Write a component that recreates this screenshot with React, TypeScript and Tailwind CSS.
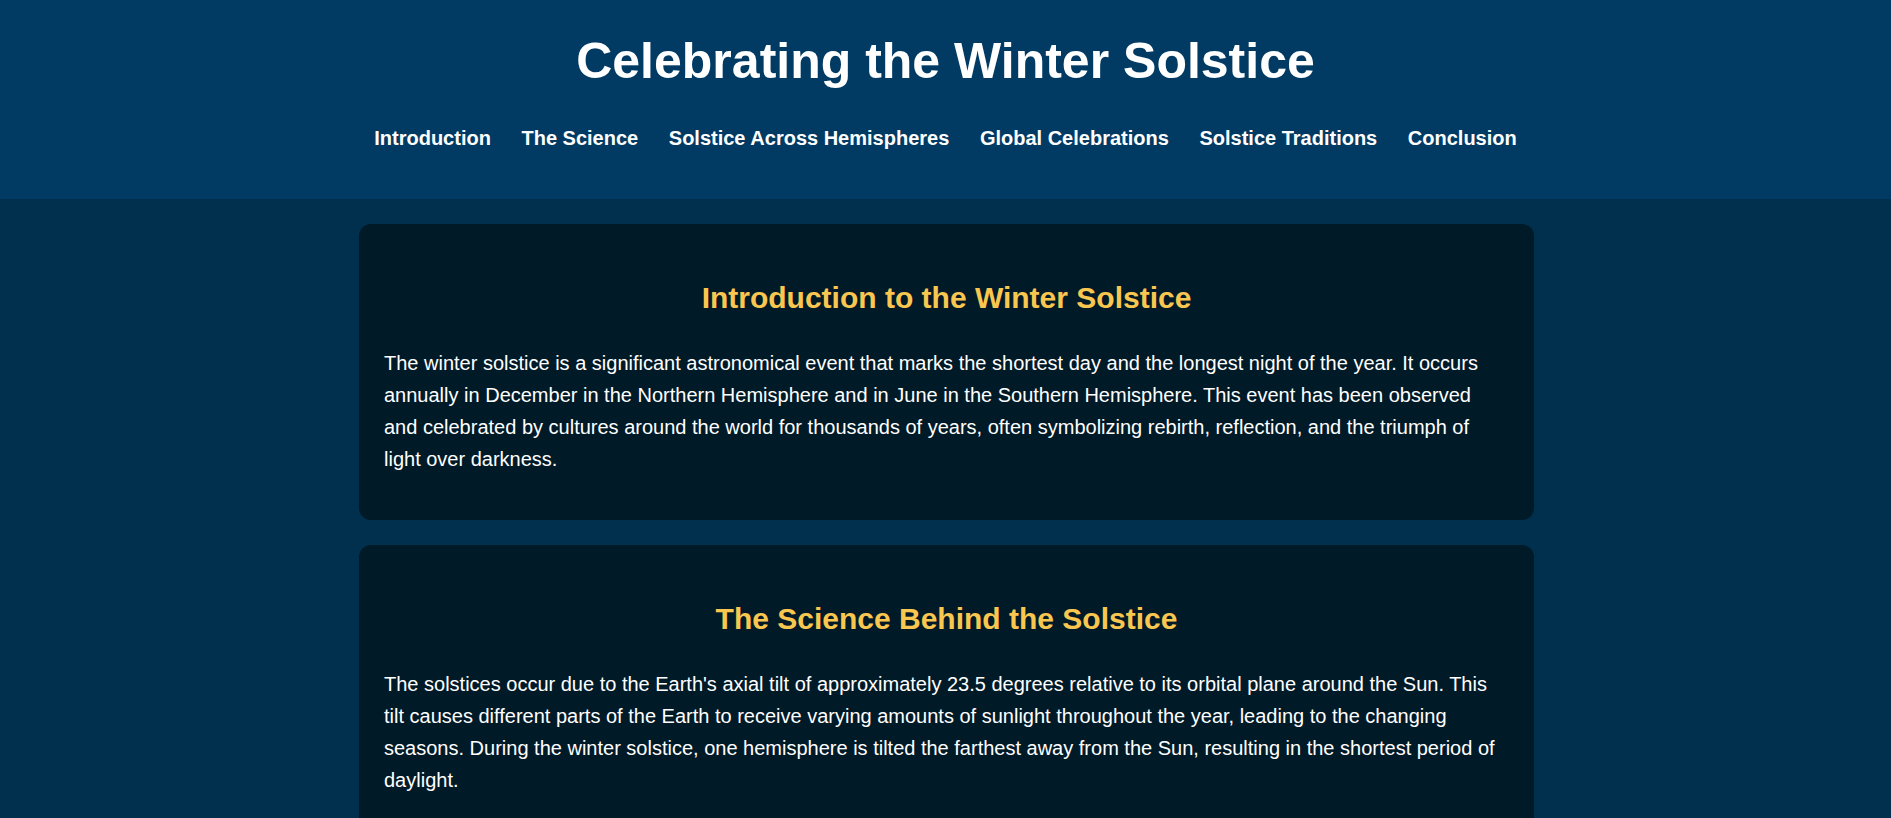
import React from "react";

const navItems = [
  "Introduction",
  "The Science",
  "Solstice Across Hemispheres",
  "Global Celebrations",
  "Solstice Traditions",
  "Conclusion",
];

const sections = [
  {
    title: "Introduction to the Winter Solstice",
    text: "The winter solstice is a significant astronomical event that marks the shortest day and the longest night of the year. It occurs annually in December in the Northern Hemisphere and in June in the Southern Hemisphere. This event has been observed and celebrated by cultures around the world for thousands of years, often symbolizing rebirth, reflection, and the triumph of light over darkness.",
  },
  {
    title: "The Science Behind the Solstice",
    text: "The solstices occur due to the Earth's axial tilt of approximately 23.5 degrees relative to its orbital plane around the Sun. This tilt causes different parts of the Earth to receive varying amounts of sunlight throughout the year, leading to the changing seasons. During the winter solstice, one hemisphere is tilted the farthest away from the Sun, resulting in the shortest period of daylight.",
  },
  {
    title: "Solstice Across Hemispheres",
    text: "While the Northern Hemisphere experiences its winter solstice around December 21st or 22nd, the Southern Hemisphere celebrates its summer solstice at the same time. Conversely, in June, the Southern Hemisphere marks its winter solstice while the north enjoys the longest day of the year.",
  },
  {
    title: "Global Celebrations",
    text: "From Yule in Scandinavia to Dongzhi in China and Inti Raymi in Peru, cultures across the globe have developed unique festivals to honor the return of the Sun and the gradual lengthening of days.",
  },
];

export default function App() {
  return (
    <div
      className="min-h-screen bg-[#01304f] text-white leading-[1.6]"
      style={{ fontFamily: '"Liberation Sans", Arial, sans-serif' }}
    >
      <header className="bg-[#013a63] pt-[33px] pb-[45px] text-center">
        <h1 className="text-[50px] font-bold leading-[56px]">Celebrating the Winter Solstice</h1>
        <nav className="mt-[33px] flex justify-center">
          {navItems.map((n) => (
            <a key={n} href="#" className="mx-[15.3px] text-[20px] font-bold leading-[32px] text-white">
              {n}
            </a>
          ))}
        </nav>
      </header>
      <main className="mx-auto w-[1177px] pl-[2px] pt-[25px]">
        {sections.map((s) => (
          <section key={s.title} className="mb-[25px] rounded-[12px] bg-[#011a28] px-[25px] py-[25px]">
            <h2 className="my-[25px] text-center text-[30px] font-bold leading-[48px] text-[#f9c74f]">
              {s.title}
            </h2>
            <p className="mb-[20px] text-[20px] leading-[32px]">{s.text}</p>
          </section>
        ))}
      </main>
    </div>
  );
}
